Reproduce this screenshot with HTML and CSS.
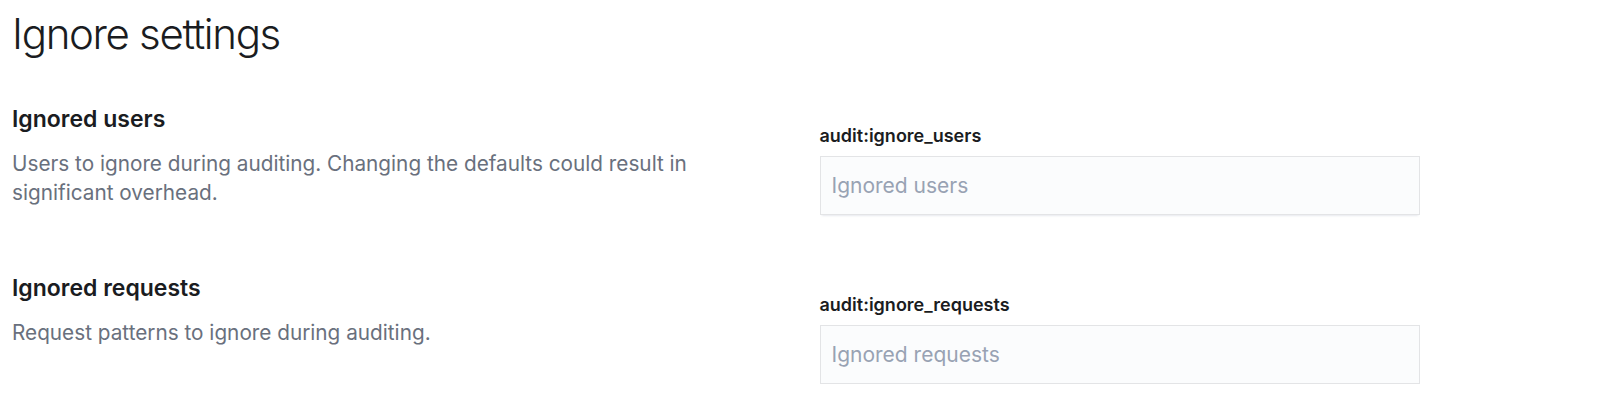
FILE: index.html
```html
<!DOCTYPE html>
<html lang="en">
<head>
<meta charset="utf-8">
<title>Ignore settings</title>
<link rel="stylesheet" href="styles.css">
</head>
<body>
<div class="page">
  <h1 class="page-title">Ignore settings</h1>

  <div class="row">
    <div class="describe">
      <h3 class="row-title">Ignored users</h3>
      <p class="row-desc">Users to ignore during auditing. Changing the defaults could result in significant overhead.</p>
    </div>
    <div class="fields">
      <label class="field-label" for="users">audit:ignore_users</label>
      <input class="field-input" id="users" type="text" placeholder="Ignored users">
    </div>
  </div>

  <div class="row row-second">
    <div class="describe">
      <h3 class="row-title">Ignored requests</h3>
      <p class="row-desc">Request patterns to ignore during auditing.</p>
    </div>
    <div class="fields">
      <label class="field-label" for="requests">audit:ignore_requests</label>
      <input class="field-input" id="requests" type="text" placeholder="Ignored requests">
    </div>
  </div>
</div>
</body>
</html>
```

FILE: styles.css
```css
html, body {
  margin: 0;
  padding: 0;
  background: #ffffff;
}

body {
  font-family: Inter, "Noto Sans", sans-serif;
  color: #1a1c21;
}

.page {
  padding: 9px 12px 0 12px;
}

.page-title {
  margin: 0;
  font-size: 42px;
  line-height: 50px;
  font-weight: 300;
  letter-spacing: -0.032em;
  color: #1a1c21;
}

.row {
  display: grid;
  grid-template-columns: 1fr 1fr;
  column-gap: 36px;
  margin-top: 45px;
}

.row-second {
  margin-top: 58px;
}

.describe {
  display: flex;
  flex-direction: column;
  gap: 16px;
}

.row-title {
  margin: 0;
  font-size: 23px;
  line-height: 30px;
  font-weight: 600;
  color: #1a1c21;
}

.row-desc {
  margin: 0;
  font-size: 20.75px;
  line-height: 28.5px;
  font-weight: 400;
  color: #69707d;
}

.fields {
  padding-top: 18px;
  display: flex;
  flex-direction: column;
  gap: 7px;
}

.field-label {
  font-size: 18px;
  line-height: 27px;
  font-weight: 600;
  color: #1a1c21;
}

.field-input {
  box-sizing: border-box;
  width: 600px;
  height: 59px;
  padding: 0 12px;
  border: none;
  border-radius: 0;
  background: #fbfcfd;
  font-family: Inter, "Noto Sans", sans-serif;
  font-size: 21px;
  color: #343741;
  outline: none;
  box-shadow: 0 1px 1px -1px rgba(152, 162, 179, 0.2),
              0 3px 2px -2px rgba(152, 162, 179, 0.2),
              inset 0 0 0 1px rgba(16, 22, 26, 0.1);
}

.field-input::placeholder {
  color: #98a2b3;
  opacity: 1;
}
```
